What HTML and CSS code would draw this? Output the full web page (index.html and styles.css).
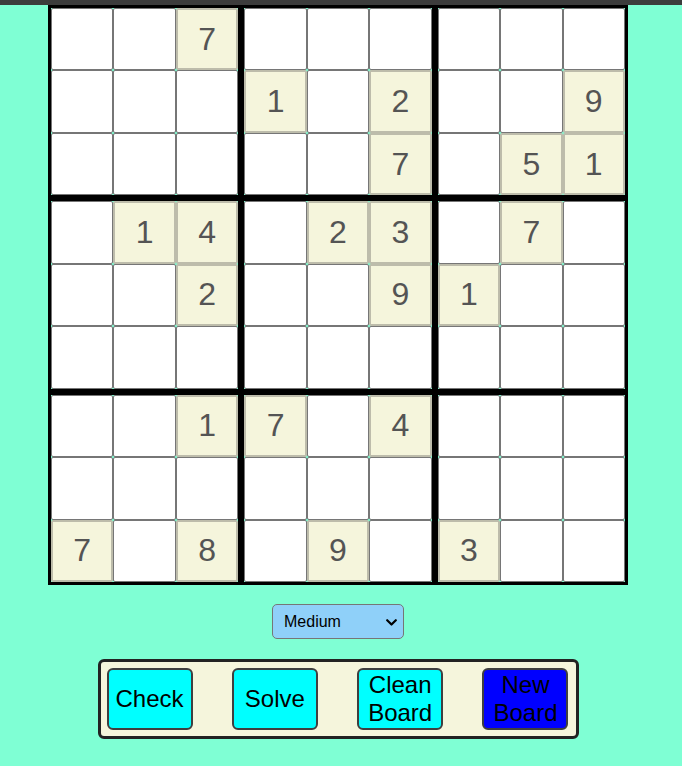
FILE: index.html
```html
<!DOCTYPE html>
<html lang="en">
<head>
<meta charset="utf-8">
<title>Sudoku</title>
<link rel="stylesheet" href="styles.css">
</head>
<body>
<div class="topbar"></div>
<main class="page">
  <div class="board">
    <div class="block">
      <div class="cell"></div><div class="cell"></div><div class="cell given">7</div>
      <div class="cell"></div><div class="cell"></div><div class="cell"></div>
      <div class="cell"></div><div class="cell"></div><div class="cell"></div>
    </div>
    <div class="block">
      <div class="cell"></div><div class="cell"></div><div class="cell"></div>
      <div class="cell given">1</div><div class="cell"></div><div class="cell given">2</div>
      <div class="cell"></div><div class="cell"></div><div class="cell given">7</div>
    </div>
    <div class="block">
      <div class="cell"></div><div class="cell"></div><div class="cell"></div>
      <div class="cell"></div><div class="cell"></div><div class="cell given">9</div>
      <div class="cell"></div><div class="cell given">5</div><div class="cell given">1</div>
    </div>
    <div class="block">
      <div class="cell"></div><div class="cell given">1</div><div class="cell given">4</div>
      <div class="cell"></div><div class="cell"></div><div class="cell given">2</div>
      <div class="cell"></div><div class="cell"></div><div class="cell"></div>
    </div>
    <div class="block">
      <div class="cell"></div><div class="cell given">2</div><div class="cell given">3</div>
      <div class="cell"></div><div class="cell"></div><div class="cell given">9</div>
      <div class="cell"></div><div class="cell"></div><div class="cell"></div>
    </div>
    <div class="block">
      <div class="cell"></div><div class="cell given">7</div><div class="cell"></div>
      <div class="cell given">1</div><div class="cell"></div><div class="cell"></div>
      <div class="cell"></div><div class="cell"></div><div class="cell"></div>
    </div>
    <div class="block">
      <div class="cell"></div><div class="cell"></div><div class="cell given">1</div>
      <div class="cell"></div><div class="cell"></div><div class="cell"></div>
      <div class="cell given">7</div><div class="cell"></div><div class="cell given">8</div>
    </div>
    <div class="block">
      <div class="cell given">7</div><div class="cell"></div><div class="cell given">4</div>
      <div class="cell"></div><div class="cell"></div><div class="cell"></div>
      <div class="cell"></div><div class="cell given">9</div><div class="cell"></div>
    </div>
    <div class="block">
      <div class="cell"></div><div class="cell"></div><div class="cell"></div>
      <div class="cell"></div><div class="cell"></div><div class="cell"></div>
      <div class="cell given">3</div><div class="cell"></div><div class="cell"></div>
    </div>
  </div>

  <div class="level-wrap">
    <select class="level">
      <option>Easy</option>
      <option selected>Medium</option>
      <option>Hard</option>
    </select>
    <svg class="chev" width="11" height="7" viewBox="0 0 11 7" aria-hidden="true">
      <path d="M1.2 1.2 L5.5 5.5 L9.8 1.2" fill="none" stroke="#000" stroke-width="2.2" stroke-linecap="round" stroke-linejoin="round"/>
    </svg>
  </div>

  <div class="controls">
    <button class="btn">Check</button>
    <button class="btn">Solve</button>
    <button class="btn">Clean Board</button>
    <button class="btn btn-new">New Board</button>
  </div>
</main>
</body>
</html>
```
FILE: styles.css
```css
html, body {
  margin: 0;
  padding: 0;
}
body {
  background: #7fffd4;
  font-family: "Liberation Sans", Arial, sans-serif;
  width: 682px;
}
.topbar {
  height: 5px;
  background: #3c3c3c;
}
.page {
  width: 676px;
  display: flex;
  flex-direction: column;
  align-items: center;
}
.board {
  width: 580px;
  height: 580px;
  display: grid;
  grid-template-columns: repeat(3, 1fr);
  grid-template-rows: repeat(3, 1fr);
}
.block {
  border: 3px solid #000;
  display: grid;
  grid-template-columns: repeat(3, 1fr);
  grid-template-rows: repeat(3, 1fr);
  min-width: 0;
  min-height: 0;
}
.cell {
  box-sizing: border-box;
  background: #fff;
  border: 1px solid #767676;
  border-radius: 2px;
  display: flex;
  align-items: center;
  justify-content: center;
  font-size: 32px;
  color: #545454;
  min-width: 0;
  min-height: 0;
}
.cell.given {
  background: #f5f5dc;
  border: 2px solid #bdbcab;
}
.level-wrap {
  position: relative;
  margin-top: 19px;
  width: 132px;
  height: 35px;
}
.level {
  -webkit-appearance: none;
  appearance: none;
  box-sizing: border-box;
  width: 132px;
  height: 35px;
  background-color: #8fd0f9;
  border: 1px solid #767676;
  border-radius: 5px;
  font-family: "Liberation Sans", Arial, sans-serif;
  font-size: 16px;
  color: #000;
  padding: 0 24px 0 11px;
  margin: 0;
}
.chev {
  position: absolute;
  right: 7px;
  top: 15px;
  pointer-events: none;
}
.controls {
  margin-top: 20px;
  box-sizing: border-box;
  width: 481px;
  border: 3px solid #222;
  border-radius: 6px;
  background: #f5f5dc;
  padding: 6px 7px 6px 6px;
  display: flex;
  justify-content: space-between;
}
.btn {
  width: 86px;
  height: 62px;
  padding: 0;
  border: 2px solid #3f3f3f;
  border-radius: 6px;
  background: #00ffff;
  color: #000;
  font-family: "Liberation Sans", Arial, sans-serif;
  font-size: 24px;
  line-height: 1.15;
}
.btn-new {
  background: #0000ff;
}
```
